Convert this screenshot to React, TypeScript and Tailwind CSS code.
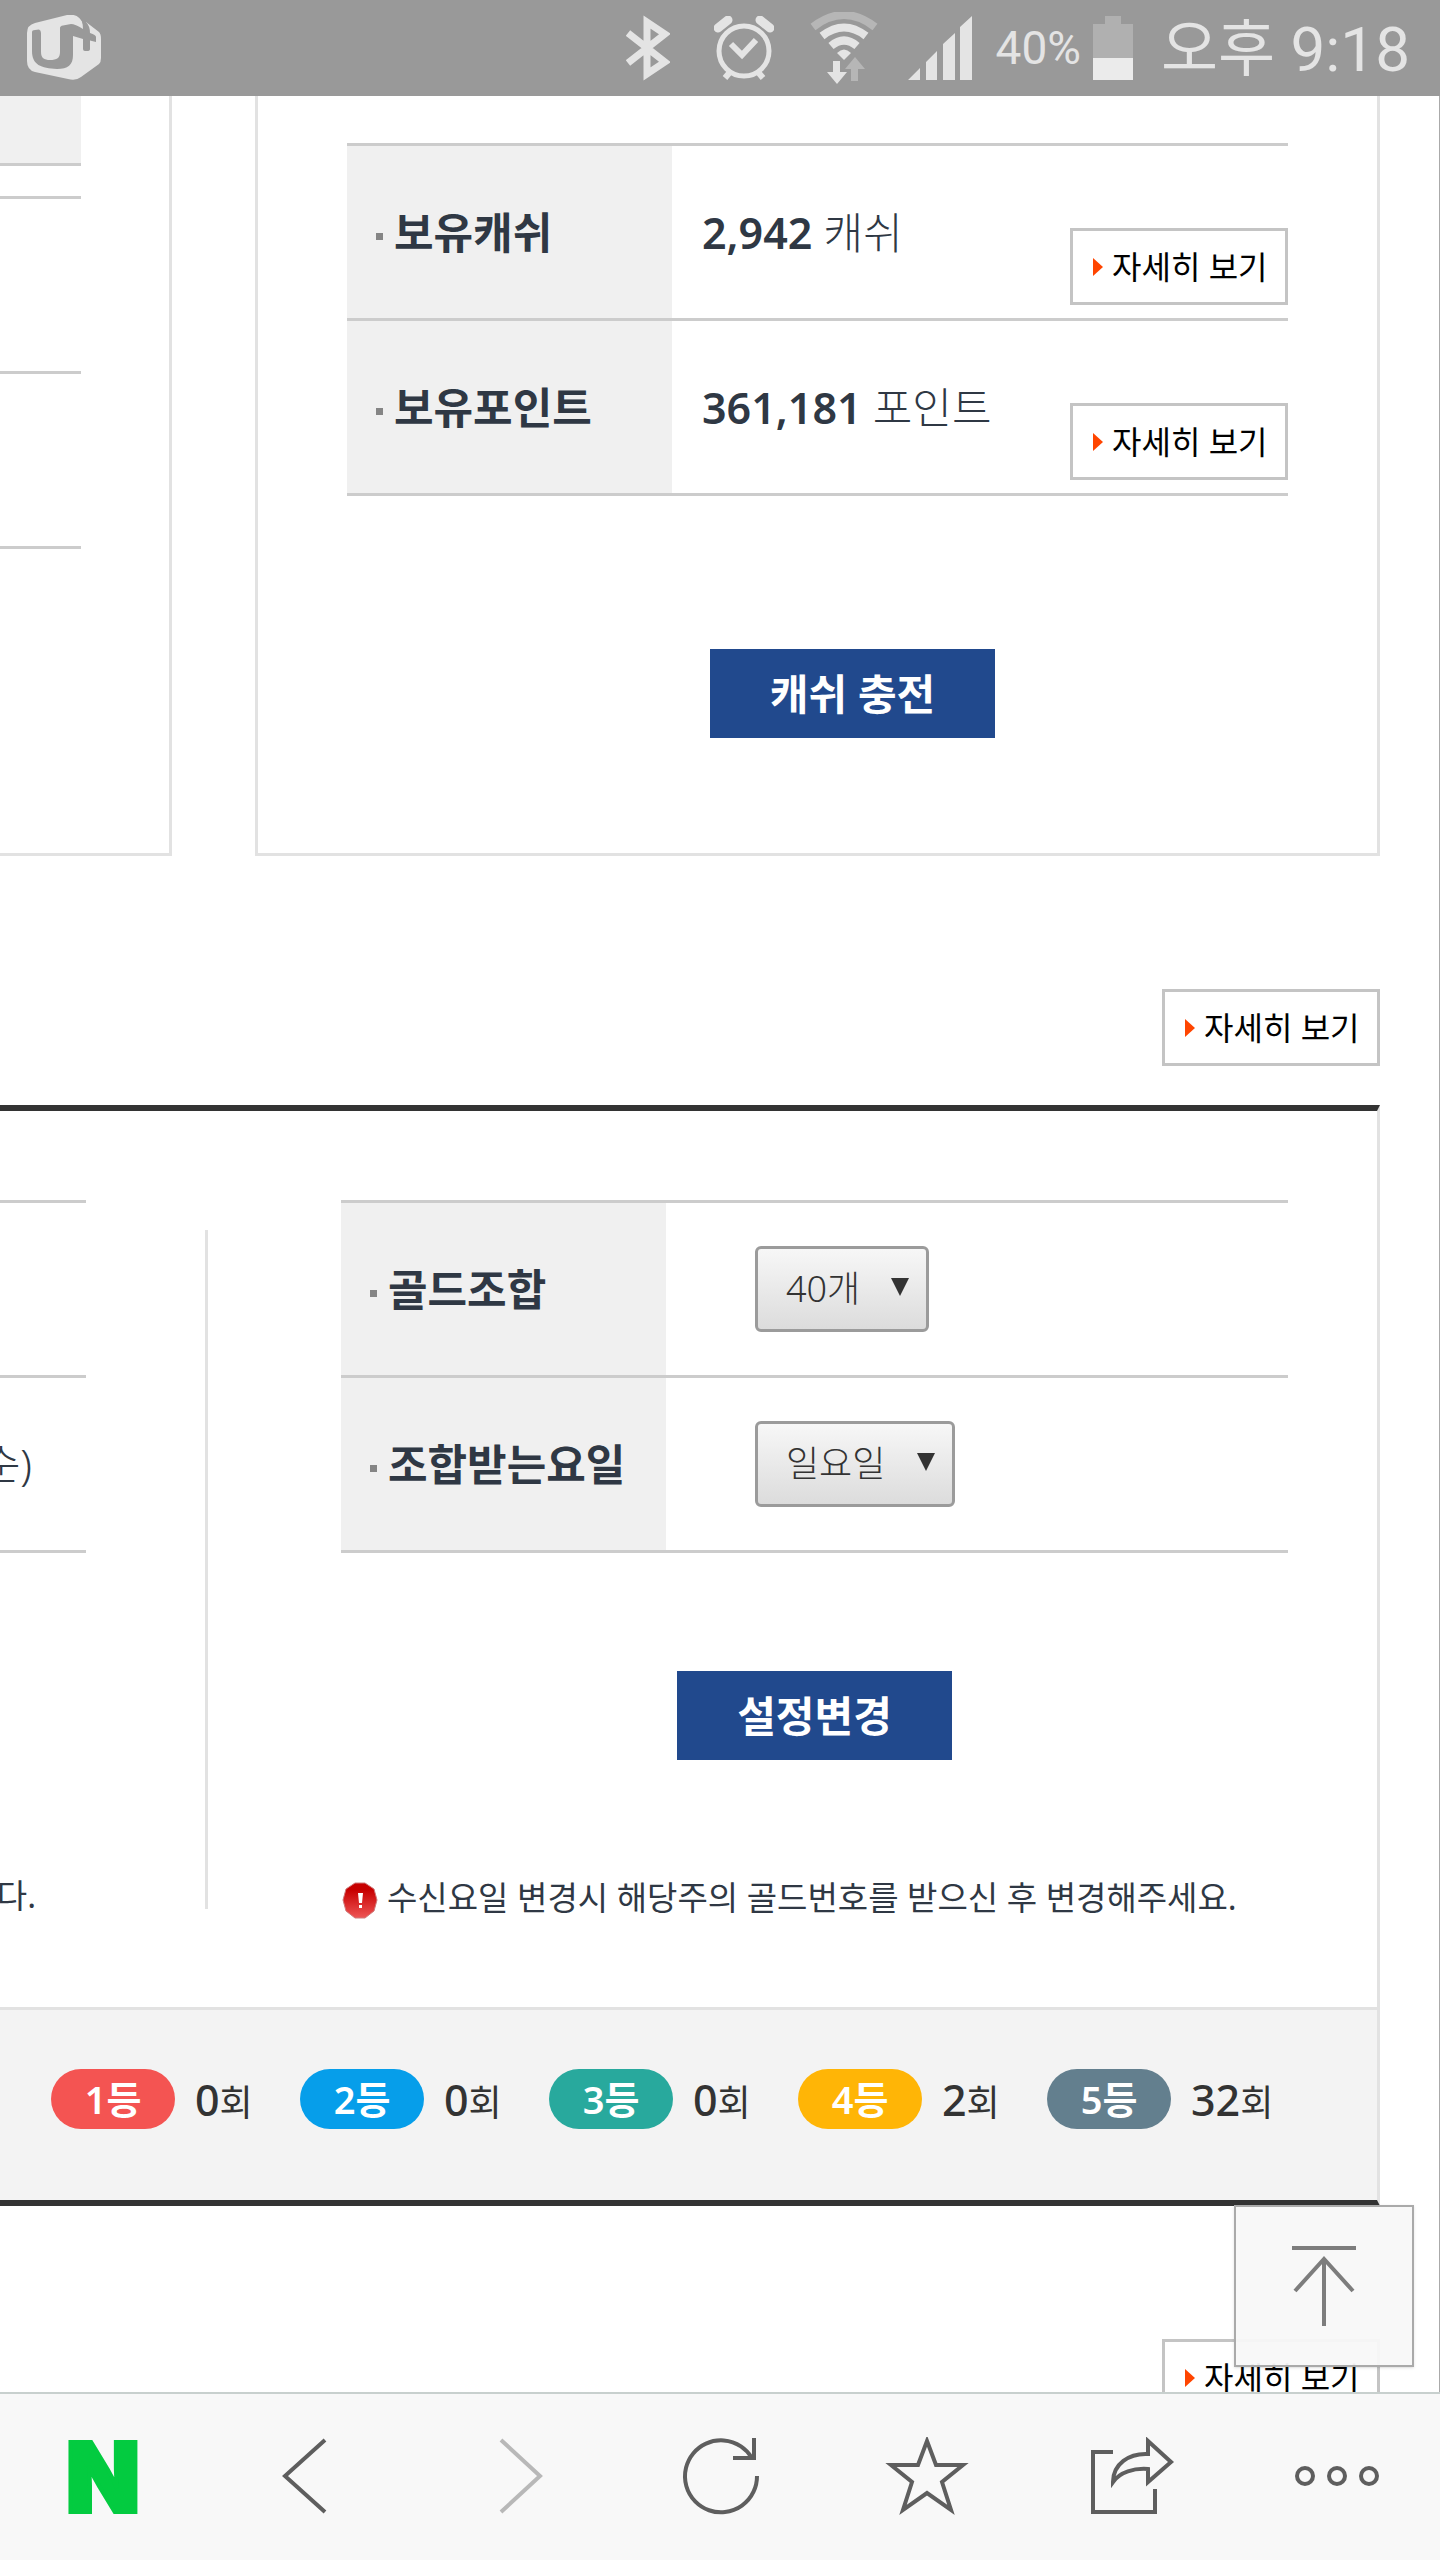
import { useRef, useState } from 'react';
import type { ReactNode } from 'react';
import clsx from 'clsx';

const ranks = [
    { label: '1등', count: 0, color: 'bg-[#f45452]' },
    { label: '2등', count: 0, color: 'bg-[#069eea]' },
    { label: '3등', count: 0, color: 'bg-[#28a99d]' },
    { label: '4등', count: 2, color: 'bg-[#ffb506]' },
    { label: '5등', count: 32, color: 'bg-[#637f8e]' },
];

function StatusBar() {
    return (
        <header className="flex h-24 shrink-0 items-center justify-between bg-[#999] pr-[30px] pl-[27px] text-[#e4e4e4]">
            {/* Carrier logo */}
            <svg className="h-[66px] w-[75px]" viewBox="0 0 75 66" aria-label="U+">
                <path d="M8 8 40 0Q52-2 56 9L59 7 72 17Q74 19 74 24V43Q74 47 72 49L54 62Q49 66 41 64L8 57Q0 55 0 46V18Q0 10 8 8Z" fill="#e4e4e4" />
                <path d="M5 17Q5 15 8 15L12 14.500Q14 15 14 18V37C14 43 17 45 23 45C30 45 33 43 33 37V13Q33 11 36 10.500L44 9Q48 9 56 14Q56 6 52 0H59V7Q63 11 63 18Q69 20 69 22V27L63 25.500V34Q63 36 60 36H58Q56 36 56 34V24L46 21V40C46 50 41 54 30 54C14 53 5 50 5 36Z" fill="#999" />
            </svg>

            <div className="flex items-center">
                <svg className="h-[66px] w-11" viewBox="0 0 44 66" fill="none" stroke="currentColor" strokeWidth="7">
                    <path d="M2 18 39 47 21 59V7L39 19 2 48" />
                </svg>
                <svg className="ml-11 h-16 w-[60px]" viewBox="0 0 60 64" fill="none" stroke="currentColor">
                    <circle cx="30" cy="35" r="25" strokeWidth="5" />
                    <path d="M17 28 28 39 42 24" strokeWidth="6" />
                    <path d="M4 12 14 4M56 12 46 4" strokeWidth="9" strokeLinecap="round" />
                    <path d="M16 56 11 62M44 56 49 62" strokeWidth="6" />
                </svg>
                <svg className="ml-9 h-[72px] w-[68px]" viewBox="0 0 68 72" fill="none" stroke="currentColor">
                    <path d="M3 15Q34-9 65 15" strokeWidth="8" stroke="#b6b6b6" />
                    <path d="M12 24Q34 7 56 24M21 34Q34 23 47 34" strokeWidth="8" />
                    <path d="M27 41Q34 34 41 41L34 48Z" fill="currentColor" stroke="none" />
                    <path d="M23 49H30V60H37L27 72 17 60H23Z" fill="currentColor" stroke="none" />
                    <path d="M41 69H48V57H55L45 45 35 57H41Z" fill="#b6b6b6" stroke="none" />
                </svg>
                <svg className="ml-[30px] h-16 w-16" viewBox="0 0 64 64" fill="currentColor">
                    <path d="M0 64 12 52V64ZM18 46 29 35V64H18ZM35 28 47 17V64H35ZM52 11 64 0V64H52Z" />
                </svg>
                <span className="ml-6 text-[46px] leading-none">40%</span>
                <svg className="ml-3 h-16 w-10" viewBox="0 0 40 64">
                    <path d="M12 0H28V8H40V42H0V8H12Z" fill="#b0b0b0" />
                    <path d="M0 42H40V64H0Z" fill="#ebebeb" />
                </svg>
                <time className="ml-7 pt-1 text-[62px] leading-none">오후 9:18</time>
            </div>
        </header>
    );
}

function DetailLink() {
    return (
        <a href="#detail" className="flex h-[77px] w-[218px] shrink-0 items-center gap-[9px] border-3 border-[#c4c4c4] bg-white pl-5 text-[32px] leading-none whitespace-nowrap text-black">
            <svg className="h-[18px] w-[10px] shrink-0" viewBox="0 0 10 18" fill="#ff4500">
                <path d="M0 0 10 9 0 18Z" />
            </svg>
            자세히 보기
        </a>
    );
}

function BlueButton({ children }: { children: ReactNode }) {
    return (
        <button type="button" className="h-[89px] bg-[#21498d] px-[60px] text-[42px] leading-none font-bold text-white">
            {children}
        </button>
    );
}

function InfoTable({ children }: { children: ReactNode }) {
    return (
        <table className="w-full border-separate border-spacing-0 border-t-3 border-[#ccc]">
            <tbody>{children}</tbody>
        </table>
    );
}

function InfoRow({ label, htmlFor, children }: { label: string; htmlFor?: string; children: ReactNode }) {
    return (
        <tr className="h-[175px]">
            <th scope="row" className="w-[325px] border-b-3 border-[#ccc] bg-[#f0f0f0] p-0 pl-[29px] text-left text-[43px] leading-none font-bold">
                <span className="flex items-center gap-[11px] whitespace-nowrap">
                    <span className="mt-2 size-[7px] bg-[#858585]" />
                    {htmlFor ? <label htmlFor={htmlFor}>{label}</label> : label}
                </span>
            </th>
            <td className="border-b-3 border-[#ccc] p-0">{children}</td>
        </tr>
    );
}

function Balance({ amount, unit }: { amount: string; unit: string }) {
    return (
        <div className="flex h-[172px] items-center justify-between pl-[30px] text-[43px] leading-none">
            <span className="whitespace-nowrap">
                <strong className="font-semibold">{amount}</strong> <span className="font-light">{unit}</span>
            </span>
            <div className="self-end pb-[13px]">
                <DetailLink />
            </div>
        </div>
    );
}

function SelectBox({ id, options, className }: { id: string; options: string[]; className: string }) {
    const [value, setValue] = useState(options[0]);

    return (
        <div className={clsx('relative ml-[89px]', className)}>
            <select
                id={id}
                value={value}
                onChange={(e) => setValue(e.target.value)}
                className="h-[86px] w-full appearance-none rounded-md border-3 border-[#9b9b9b] bg-linear-to-b from-[#f7f7f7] to-[#dcdcdc] pl-7 text-[36px] leading-none font-light text-[#333]"
            >
                {options.map((option) => (
                    <option key={option}>{option}</option>
                ))}
            </select>
            <svg className="pointer-events-none absolute top-8 right-5 h-[18px] w-[18px]" viewBox="0 0 18 18" fill="#333">
                <path d="M0 0H18L9 18Z" />
            </svg>
        </div>
    );
}

function BottomBar() {
    const iconClass = 'h-20 w-[88px]';
    return (
        <nav className="grid h-[168px] shrink-0 grid-cols-7 border-t-2 border-[#c8d0ce] bg-[#f8f8f8] text-[#5e5e5e]">
            <a href="#home" className="flex items-center justify-center font-[Inter,sans-serif] text-[96px] leading-none font-black text-[#03cb40] [-webkit-text-stroke:4px_#03cb40]">N</a>
            <button type="button" aria-label="뒤로" className="flex items-center justify-center">
                <svg className={iconClass} viewBox="0 0 88 80" fill="none" stroke="currentColor" strokeWidth="4">
                    <path d="M60 3 20 39 60 75" />
                </svg>
            </button>
            <button type="button" aria-label="앞으로" className="flex items-center justify-center text-[#b8b8b8]">
                <svg className={iconClass} viewBox="0 0 88 80" fill="none" stroke="currentColor" strokeWidth="4">
                    <path d="M31 3 70 39 31 75" />
                </svg>
            </button>
            <button type="button" aria-label="새로고침" className="flex items-center justify-center">
                <svg className={iconClass} viewBox="0 0 88 80" fill="none" stroke="currentColor" strokeWidth="4">
                    <path d="M81 39A36 36 0 1 1 76 21" />
                    <path d="M78 1V21H57" />
                </svg>
            </button>
            <button type="button" aria-label="즐겨찾기" className="flex items-center justify-center">
                <svg className={iconClass} viewBox="0 0 88 80" fill="none" stroke="currentColor" strokeWidth="4">
                    <path d="M45 4 54 28H81L60 45 69 73 45 56 21 73 30 45 9 28H36Z" />
                </svg>
            </button>
            <button type="button" aria-label="공유" className="flex items-center justify-center">
                <svg className={iconClass} viewBox="0 0 88 80" fill="none" stroke="currentColor" strokeWidth="4">
                    <path d="M26 15H6V75H68V52" />
                    <path d="M61 4 84 25 61 45V32C47 31 33 35 26 45C26 27 42 16 61 17Z" />
                </svg>
            </button>
            <button type="button" aria-label="더보기" className="flex items-center justify-center">
                <svg className={iconClass} viewBox="0 0 88 80" fill="none" stroke="currentColor" strokeWidth="4">
                    <circle cx="12" cy="39" r="8" />
                    <circle cx="44" cy="39" r="8" />
                    <circle cx="76" cy="39" r="8" />
                </svg>
            </button>
        </nav>
    );
}

export default function App() {
    const mainRef = useRef<HTMLElement>(null);

    return (
        <div className="flex h-screen flex-col bg-white font-[Noto_Sans,Noto_Sans_CJK_KR,sans-serif] text-[#2f3844]">
            <div className="contents font-[Roboto,Noto_Sans_CJK_KR,sans-serif]">
                <StatusBar />
            </div>

            <div className="relative min-h-0 flex-1">
                <main ref={mainRef} className="h-full overflow-x-hidden overflow-y-auto border-r border-[#aaa] pr-[59px] [scrollbar-width:none]">
                    {/* CASH & POINTS */}
                    <section className="flex gap-[83px]">
                        <div className="w-[172px] shrink-0 border-r-3 border-b-3 border-[#e2e2e2] pr-[88px]">
                            <div className="h-[70px] border-b-3 border-[#ccc] bg-[#f0f0f0]" />
                            <div className="mt-[30px] h-[178px] border-y-3 border-[#ccc]" />
                            <div className="h-[175px] border-b-3 border-[#ccc]" />
                        </div>
                        <div className="min-w-0 flex-1 border-x-3 border-b-3 border-[#e2e2e2] px-[89px] pt-[47px] pb-[115px]">
                            <InfoTable>
                                <InfoRow label="보유캐쉬">
                                    <Balance amount="2,942" unit="캐쉬" />
                                </InfoRow>
                                <InfoRow label="보유포인트">
                                    <Balance amount="361,181" unit="포인트" />
                                </InfoRow>
                            </InfoTable>
                            <div className="mt-[153px] flex justify-center pl-[70px]">
                                <BlueButton>캐쉬 충전</BlueButton>
                            </div>
                        </div>
                    </section>

                    <div className="mt-[133px] flex justify-end">
                        <DetailLink />
                    </div>

                    {/* GOLD COMBINATION SETTINGS */}
                    <section className="mt-[39px] border-y-6 border-r-3 border-y-[#333] border-r-[#e2e2e2]">
                        <div className="flex">
                            <div className="w-[205px] shrink-0 pt-[89px]">
                                <div className="h-[178px] w-[86px] border-y-3 border-[#ccc]" />
                                <div className="flex h-[175px] w-[86px] items-center border-b-3 border-[#ccc]">
                                    <span className="flex w-8 justify-end overflow-hidden text-[42px] leading-[50px] font-light">순)</span>
                                </div>
                                <p className="mt-[324px] flex w-9 justify-end overflow-hidden text-[33px] leading-[38px]">다.</p>
                            </div>
                            <div className="mt-[119px] mb-[98px] w-[3px] shrink-0 bg-[#e2e2e2]" />
                            <div className="min-w-0 flex-1 pt-[89px] pr-[89px] pb-[88px] pl-[133px]">
                                <InfoTable>
                                    <InfoRow label="골드조합" htmlFor="gold-count">
                                        <SelectBox id="gold-count" options={['40개', '30개', '20개', '10개']} className="w-[174px]" />
                                    </InfoRow>
                                    <InfoRow label="조합받는요일" htmlFor="gold-day">
                                        <SelectBox id="gold-day" options={['일요일', '월요일', '화요일', '수요일', '목요일', '금요일', '토요일']} className="w-[200px]" />
                                    </InfoRow>
                                </InfoTable>
                                <div className="mt-[118px] flex justify-center">
                                    <BlueButton>설정변경</BlueButton>
                                </div>
                                <p className="mt-[121px] flex h-[38px] items-start gap-2 text-[33px] leading-[34px] whitespace-nowrap">
                                    <svg className="size-[38px] shrink-0" viewBox="0 0 38 38">
                                        <defs>
                                            <linearGradient id="alert" x1="0" y1="0" x2="0" y2="1">
                                                <stop offset="0.2" stopColor="#c70000" />
                                                <stop offset="1" stopColor="#ee5555" />
                                            </linearGradient>
                                        </defs>
                                        <path d="M14 2H24L33 8 36 19 33 30 24 37H14L5 30 2 19 5 8Z" fill="url(#alert)" stroke="#cf7a7a" strokeLinejoin="round" />
                                        <path d="M17 12H22L21 22H18ZM18 24H21V27H18Z" fill="#fff" />
                                    </svg>
                                    수신요일 변경시 해당주의 골드번호를 받으신 후 변경해주세요.
                                </p>
                            </div>
                        </div>

                        {/* Win counts */}
                        <ul className="flex border-t-3 border-[#e2e2e2] bg-[#f3f3f3] pt-[59px] pb-[71px] pl-[51px] text-[#333]">
                            {ranks.map((rank) => (
                                <li key={rank.label} className="flex w-[249px] items-center gap-5 whitespace-nowrap">
                                    <span className={clsx('flex h-[60px] w-[124px] shrink-0 items-center justify-center rounded-full text-[38px] leading-none font-semibold text-white', rank.color)}>
                                        {rank.label}
                                    </span>
                                    <span className="text-[36px] leading-none">
                                        <strong className="text-[43px] font-medium">{rank.count}</strong>회
                                    </span>
                                </li>
                            ))}
                        </ul>
                    </section>

                    <div className="mt-[133px] flex justify-end">
                        <DetailLink />
                    </div>
                </main>

                {/* Scroll to top */}
                <button
                    type="button"
                    aria-label="맨 위로"
                    onClick={() => mainRef.current?.scrollTo({ top: 0, behavior: 'smooth' })}
                    className="absolute right-[26px] bottom-[25px] flex h-[162px] w-[180px] items-center justify-center border-2 border-[#aaa] bg-[#f8f8f8]/95 shadow-sm"
                >
                    <svg className="h-[84px] w-16" viewBox="0 0 64 84" fill="none" stroke="#7d7d7d" strokeWidth="4">
                        <path d="M0 4H64M32 82V15M3 47 32 15 61 47" />
                    </svg>
                </button>
            </div>

            <BottomBar />
        </div>
    );
}
